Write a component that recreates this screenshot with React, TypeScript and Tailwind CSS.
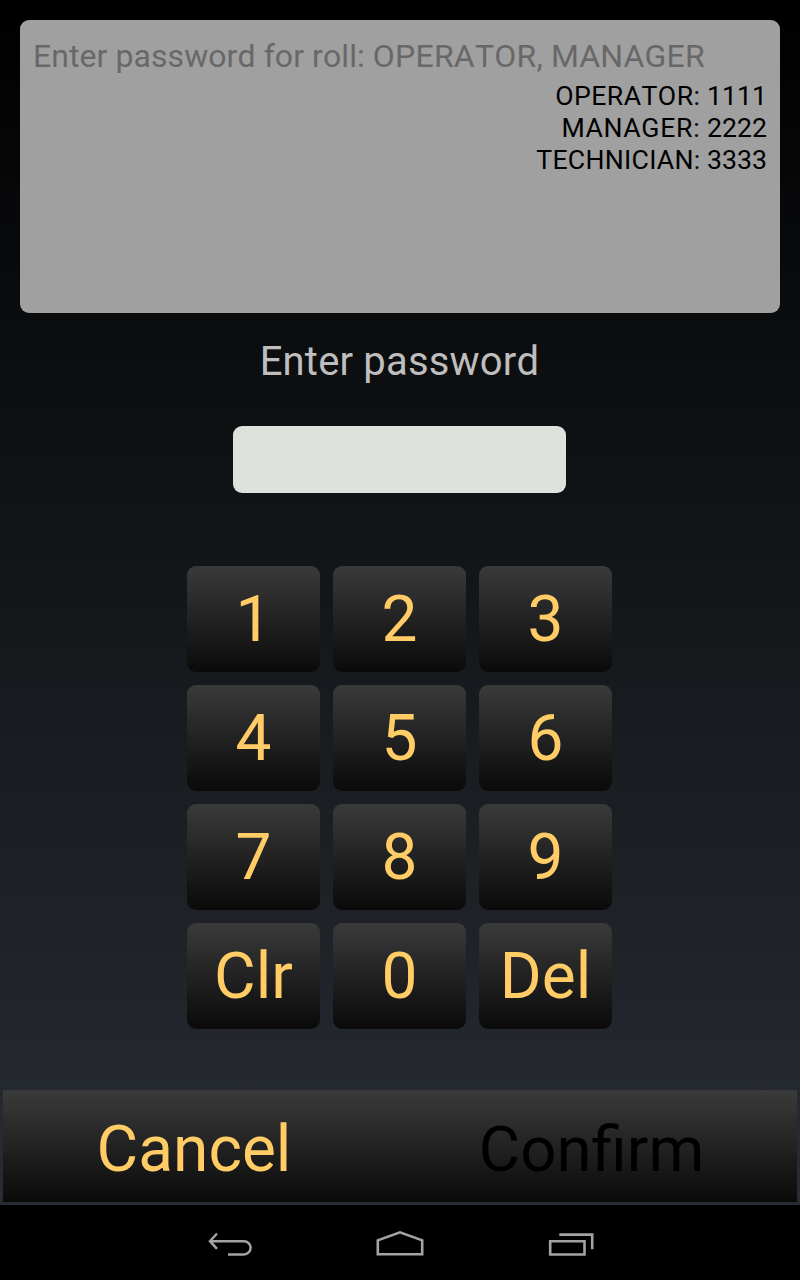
const credentials = [
  { role: "OPERATOR:", code: "1111", tracking: "tracking-[0.45px]" },
  { role: "MANAGER:", code: "2222", tracking: "tracking-[0.72px]" },
  { role: "TECHNICIAN:", code: "3333", tracking: "tracking-[0.28px]" },
];
const keys = ["1", "2", "3", "4", "5", "6", "7", "8", "9", "Clr", "0", "Del"];

function Key({ label }: { label: string }) {
  return (
    <button className="flex h-[106px] w-[133px] items-center justify-center rounded-[9px] bg-linear-to-b/srgb from-[#3a3a3a] to-[#0a0a0a] pt-px text-[64px] leading-none text-[#ffcc66]">
      {label}
    </button>
  );
}

function NavigationBar() {
  return (
    <nav className="grid h-[75px] grid-cols-[208px_168px_172px_1fr] bg-black pt-[25px]">
      <span />
      <svg width="46" height="30" viewBox="208 1230 46 30" fill="none" stroke="#a3a3a3" strokeWidth="2.5">
        <path d="M217 1233.5l-7 7.7 7 7.7M210 1241.2h34a6.6 6.6 0 0 1 0 13.2h-16" />
      </svg>
      <svg width="50" height="30" viewBox="376 1230 50 30" fill="none" stroke="#a3a3a3" strokeWidth="2.6">
        <path d="M377.8 1254.3v-14l22.2-8 22.2 8v14z" />
      </svg>
      <svg width="48" height="30" viewBox="548 1230 48 30" fill="none" stroke="#a3a3a3" strokeWidth="2.6">
        <path d="M550.2 1241.2h34.3v13.3h-34.3zM559.3 1234.6h32.9v14.7" />
      </svg>
    </nav>
  );
}

export default function App() {
  return (
    <div className="flex h-[1280px] w-[800px] flex-col overflow-hidden bg-black font-['Roboto',sans-serif] [font-kerning:none]">
      <main className="flex h-[1205px] flex-col items-center bg-linear-to-b/srgb from-black to-[#282d34] pt-5">
        <section className="h-[293px] w-[760px] rounded-[9px] bg-[#a0a0a0] px-[13px] pt-[15px]">
          <p className="h-[45px] text-[32px] leading-[42px] tracking-[0.07px] whitespace-nowrap text-[#686868]">
            Enter password for roll: <span className="tracking-[0.22px]">OPERATOR, MANAGER</span>
          </p>
          <div className="text-right text-[26.67px] leading-8 text-black">
            {credentials.map(({ role, code, tracking }) => (
              <p key={role}><span className={tracking}>{role}</span> {code}</p>
            ))}
          </div>
        </section>
        <h1 className="mt-[25px] h-[88px] pr-px text-[40px] leading-[48px] tracking-[0.18px] text-[#bebebe]">Enter password</h1>
        <div className="flex flex-col items-center pr-px">
          <input type="password" aria-label="Password" className="h-[67px] w-[333px] shrink-0 rounded-[9px] bg-[#dfe1dc] outline-none" />
          <div className="mt-[73px] grid grid-cols-3 gap-[13px]">
            {keys.map((label) => <Key key={label} label={label} />)}
          </div>
        </div>
        <div className="mt-[61px] grid h-[112px] w-[794px] grid-cols-2 bg-linear-to-b/srgb from-[#3a3a3a] to-[#0a0a0a] pt-2 pr-[14px] text-[64px] leading-none">
          <button className="pr-2 text-[#ffcc66]">Cancel</button>
          <button disabled className="pl-[7px] text-[63.6px] text-black">Confirm</button>
        </div>
      </main>
      <NavigationBar />
    </div>
  );
}
